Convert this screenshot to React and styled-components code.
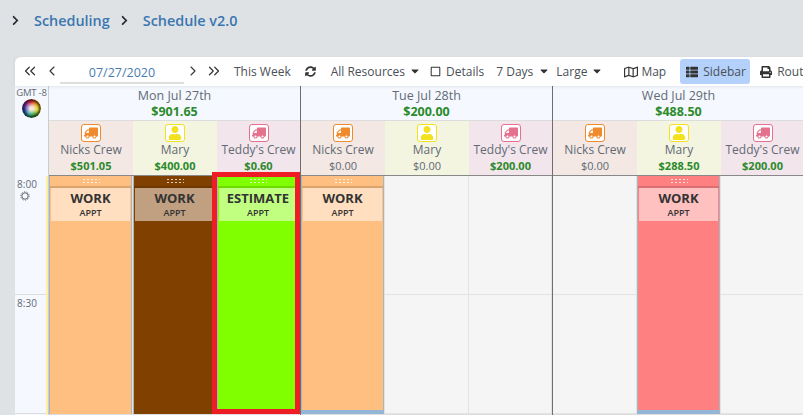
import React from "react";
import styled, { createGlobalStyle } from "styled-components";
import { ChevronLeft, ChevronRight, ChevronsLeft, ChevronsRight } from "lucide-react";
import {
  FaCaretDown,
  FaChevronRight,
  FaPrint,
  FaRegMap,
  FaRegSquare,
  FaSyncAlt,
  FaThList,
  FaTruck,
  FaUser,
} from "react-icons/fa";

const Global = createGlobalStyle`
  html, body {
    margin: 0;
    height: 415px;
    overflow: hidden;
    background: #dfe2e5;
    font-family: "Open Sans", "Liberation Sans", sans-serif;
    color: #626a75;
  }
`;

const Page = styled.div`
  width: 803px;
  height: 415px;
  overflow: hidden;
`;

const Crumbs = styled.div`
  display: flex;
  align-items: center;
  height: 57px;
  padding: 0 0 17px 10px;
  box-sizing: border-box;
  font-size: 14.4px;
  font-weight: 600;
  color: #3a76b0;
  svg {
    color: #2b2b33;
    font-size: 11px;
  }
`;

const Crumb = styled.span`
  margin: 0 9px 0 13px;
`;

const Card = styled.div`
  margin-left: 15px;
  width: 1050px;
  background: #fff;
  border-radius: 6px 0 0 0;
`;

const Toolbar = styled.div`
  display: flex;
  align-items: center;
  height: 29px;
  padding: 0 0 1px 6px;
  box-sizing: border-box;
  font-size: 12px;
  color: #4a4f57;
  white-space: nowrap;
  box-shadow: 0 1px 3px rgba(0, 0, 0, 0.08);
  position: relative;
`;

const Tool = styled.span`
  display: inline-flex;
  align-items: center;
  gap: ${(p) => p.$gap ?? 4}px;
  margin-left: ${(p) => p.$ml ?? 0}px;
  svg {
    color: #333;
    flex: none;
  }
`;

const DateField = styled.div`
  width: 124px;
  height: 25px;
  line-height: 28px;
  text-align: center;
  font-size: 12.5px;
  color: #4a7cb0;
  border-bottom: 2px solid #ddd;
  box-sizing: border-box;
`;

const MapTool = styled(Tool)`
  margin-top: 1px;
`;

const ActiveTool = styled(Tool)`
  height: 25px;
  width: 70px;
  box-sizing: border-box;
  margin-top: 1px;
  padding-left: 6px;
  background: #b3d1fb;
  border-radius: 3px;
`;

const Schedule = styled.div`
  display: grid;
  grid-template-columns: 34px repeat(4, 252px);
  height: 329px;
`;

const TimeColumn = styled.div`
  background: #f5f9ff;
  display: flex;
  flex-direction: column;
  align-items: center;
  font-size: 10px;
  border-right: 1px solid #c9ccd0;
`;

const Gmt = styled.div`
  font-size: 9.5px;
  line-height: 12px;
  margin-top: 1px;
  letter-spacing: -0.2px;
`;

const Wheel = styled.div`
  width: 19px;
  height: 19px;
  border-radius: 50%;
  background: radial-gradient(circle, #f5e8da 0 12%, transparent 52%),
    conic-gradient(#d92020, #e8a010, #e0dc20, #30a030, #20a0a0, #2040c0, #8020a0, #d92020);
  box-shadow: inset 0 0 2px 2px rgba(30, 20, 10, 0.75);
`;

const TimeSlots = styled.div`
  margin-top: 58px;
  width: 100%;
  flex: 1;
  box-sizing: border-box;
  border-right: 2px solid #fff0a0;
`;

const TimeSlot = styled.div`
  height: 119px;
  box-sizing: border-box;
  padding: 1px 7px 0 0;
  font-size: 10px;
  line-height: 14px;
  text-align: center;
  border-bottom: 1px solid #ddd;
  svg {
    display: block;
    margin: 0 0 0 5px;
  }
`;

const Day = styled.div`
  display: flex;
  flex-direction: column;
  border-right: 1px solid #6e6e6e;
  box-sizing: border-box;
`;

const DayHead = styled.div`
  height: 35px;
  background: #f5f9ff;
  text-align: center;
  font-size: 12.5px;
  line-height: 15px;
  padding-top: 2px;
  box-sizing: border-box;
  border-bottom: 1px solid #ddd;
`;

const DayTotal = styled.div`
  margin-top: 1px;
  font-weight: 700;
  color: #2b8a2b;
`;

const ResourceAmount = styled.div`
  font-size: 11px;
  font-weight: ${(p) => (p.$zero ? 400 : 700)};
  color: ${(p) => (p.$zero ? "#626a75" : "#2b8a2b")};
`;

const Columns = styled.div`
  display: grid;
  grid-template-columns: 84px 84px 83px;
`;

const Resource = styled.div`
  height: 55px;
  background: ${(p) => p.$bg};
  border-bottom: 1px solid #888;
  box-sizing: border-box;
  padding-top: 3px;
  text-align: center;
  font-size: 12px;
  line-height: 16px;
  white-space: nowrap;
`;

const Badge = styled.div`
  width: 20px;
  height: 18px;
  box-sizing: border-box;
  margin: 0 auto;
  background: #fff;
  border: 1.5px solid ${(p) => p.$color};
  border-radius: 3px;
  color: ${(p) => p.$color};
  display: flex;
  align-items: center;
  justify-content: center;
  font-size: 14px;
  svg.flip {
    transform: scaleX(-1);
  }
`;

const Lane = styled.div`
  height: 239px;
  box-sizing: border-box;
  background: repeating-linear-gradient(
    to bottom,
    #f5f5f5 0 118px,
    #e2e2e2 118px 119px
  );
  border-right: 1px solid #e2e2e2;
  border-bottom: 1px solid #ddd;
  position: relative;
`;

const Appointment = styled.div`
  height: 238px;
  box-sizing: border-box;
  background: ${(p) => p.$color};
  border-left: 1px solid #a9b4bd;
  border-right: 1px solid #a9b4bd;
  border-bottom: ${(p) => (p.$tail ? "4px solid #93b5d6" : "none")};
  position: relative;
`;

const Grip = styled.div`
  height: 12px;
  box-sizing: border-box;
  display: flex;
  justify-content: center;
  align-items: center;
  border-bottom: 2px solid rgba(0, 0, 0, 0.14);
  &::before {
    content: "";
    width: 18px;
    height: 6px;
    background-image: radial-gradient(circle, rgba(255, 255, 255, 0.75) 1px, transparent 1.1px);
    background-size: 4px 3px;
  }
`;

const Label = styled.div`
  margin: 0 1px;
  height: 33px;
  background: rgba(255, 255, 255, 0.5);
  text-align: center;
  color: #333;
  font-weight: 700;
  font-size: 13px;
  line-height: 19px;
  padding-top: 1px;
  box-sizing: border-box;
  span {
    display: block;
    font-size: 9px;
    line-height: 9px;
    font-weight: 600;
  }
`;

const Highlight = styled.div`
  position: absolute;
  top: -4px;
  left: -6px;
  right: -2px;
  bottom: 0;
  border: 5px solid #ee1c25;
  pointer-events: none;
`;

const CREWS = [
  { name: "Nicks Crew", bg: "#f3e8e3", color: "#f08a2c", Icon: FaTruck, flip: true },
  { name: "Mary", bg: "#f3f5e1", color: "#f2e11c", Icon: FaUser },
  { name: "Teddy's Crew", bg: "#f3e5ec", color: "#e5718f", Icon: FaTruck, flip: true },
];

const DAYS = [
  {
    label: "Mon Jul 27th",
    total: "$901.65",
    amounts: ["$501.05", "$400.00", "$0.60"],
    appts: [
      { color: "#ffbf80", title: "WORK" },
      { color: "#804000", title: "WORK" },
      { color: "#80ff00", title: "ESTIMATE", selected: true },
    ],
  },
  {
    label: "Tue Jul 28th",
    total: "$200.00",
    amounts: ["$0.00", "$0.00", "$200.00"],
    appts: [{ color: "#ffbf80", title: "WORK", tail: true }, null, null],
  },
  {
    label: "Wed Jul 29th",
    total: "$488.50",
    amounts: ["$0.00", "$288.50", "$200.00"],
    appts: [null, { color: "#ff8080", title: "WORK", tail: true }, null],
  },
];

function GearMark() {
  return (
    <svg width="10" height="10" viewBox="0 0 10 10" fill="none" stroke="#666">
      <circle cx="5" cy="5" r="3.2" strokeWidth="1" />
      <circle cx="5" cy="5" r="4.2" strokeWidth="1" strokeDasharray="1.2 1.4" />
    </svg>
  );
}

function DayColumn({ day }) {
  return (
    <Day>
      <DayHead>
        {day.label}
        <DayTotal>{day.total}</DayTotal>
      </DayHead>
      <Columns>
        {CREWS.map((crew, i) => (
          <Resource key={crew.name} $bg={crew.bg}>
            <Badge $color={crew.color}>
              <crew.Icon className={crew.flip ? "flip" : undefined} />
            </Badge>
            {crew.name}
            <ResourceAmount $zero={day.amounts[i] === "$0.00"}>{day.amounts[i]}</ResourceAmount>
          </Resource>
        ))}
      </Columns>
      <Columns>
        {day.appts.map((appt, i) => (
          <Lane key={i}>
            {appt && (
              <Appointment $color={appt.color} $tail={appt.tail}>
                <Grip />
                <Label>
                  {appt.title}
                  <span>APPT</span>
                </Label>
                {appt.selected && <Highlight />}
              </Appointment>
            )}
          </Lane>
        ))}
      </Columns>
    </Day>
  );
}

export default function App() {
  return (
    <Page>
      <Global />
      <Crumbs>
        <FaChevronRight />
        <Crumb>Scheduling</Crumb>
        <FaChevronRight />
        <Crumb>Schedule v2.0</Crumb>
      </Crumbs>
      <Card>
        <Toolbar>
          <Tool>
            <ChevronsLeft size={18} strokeWidth={1.6} />
          </Tool>
          <Tool $ml={5}>
            <ChevronLeft size={16} strokeWidth={1.6} />
          </Tool>
          <DateField>07/27/2020</DateField>
          <Tool $ml={1}>
            <ChevronRight size={16} strokeWidth={1.6} />
          </Tool>
          <Tool $ml={4}>
            <ChevronsRight size={18} strokeWidth={1.6} />
          </Tool>
          <Tool $ml={11}>This Week</Tool>
          <Tool $ml={14}>
            <FaSyncAlt size={11} />
          </Tool>
          <Tool $ml={15}>
            All Resources
            <FaCaretDown size={12} />
          </Tool>
          <Tool $ml={9} $gap={5}>
            <FaRegSquare size={11} />
            Details
          </Tool>
          <Tool $ml={12} $gap={5}>
            7 Days
            <FaCaretDown size={12} />
          </Tool>
          <Tool $ml={6}>
            Large
            <FaCaretDown size={12} />
          </Tool>
          <MapTool $ml={21} $gap={3}>
            <FaRegMap size={14} />
            Map
          </MapTool>
          <ActiveTool $ml={14} $gap={5}>
            <FaThList size={12} />
            Sidebar
          </ActiveTool>
          <MapTool $ml={10} $gap={5}>
            <FaPrint size={12} />
            Route
          </MapTool>
        </Toolbar>
        <Schedule>
          <TimeColumn>
            <Gmt>GMT -8</Gmt>
            <Wheel />
            <TimeSlots>
              <TimeSlot>
                8:00
                <GearMark />
              </TimeSlot>
              <TimeSlot>8:30</TimeSlot>
            </TimeSlots>
          </TimeColumn>
          {DAYS.map((day) => (
            <DayColumn key={day.label} day={day} />
          ))}
        </Schedule>
      </Card>
    </Page>
  );
}
